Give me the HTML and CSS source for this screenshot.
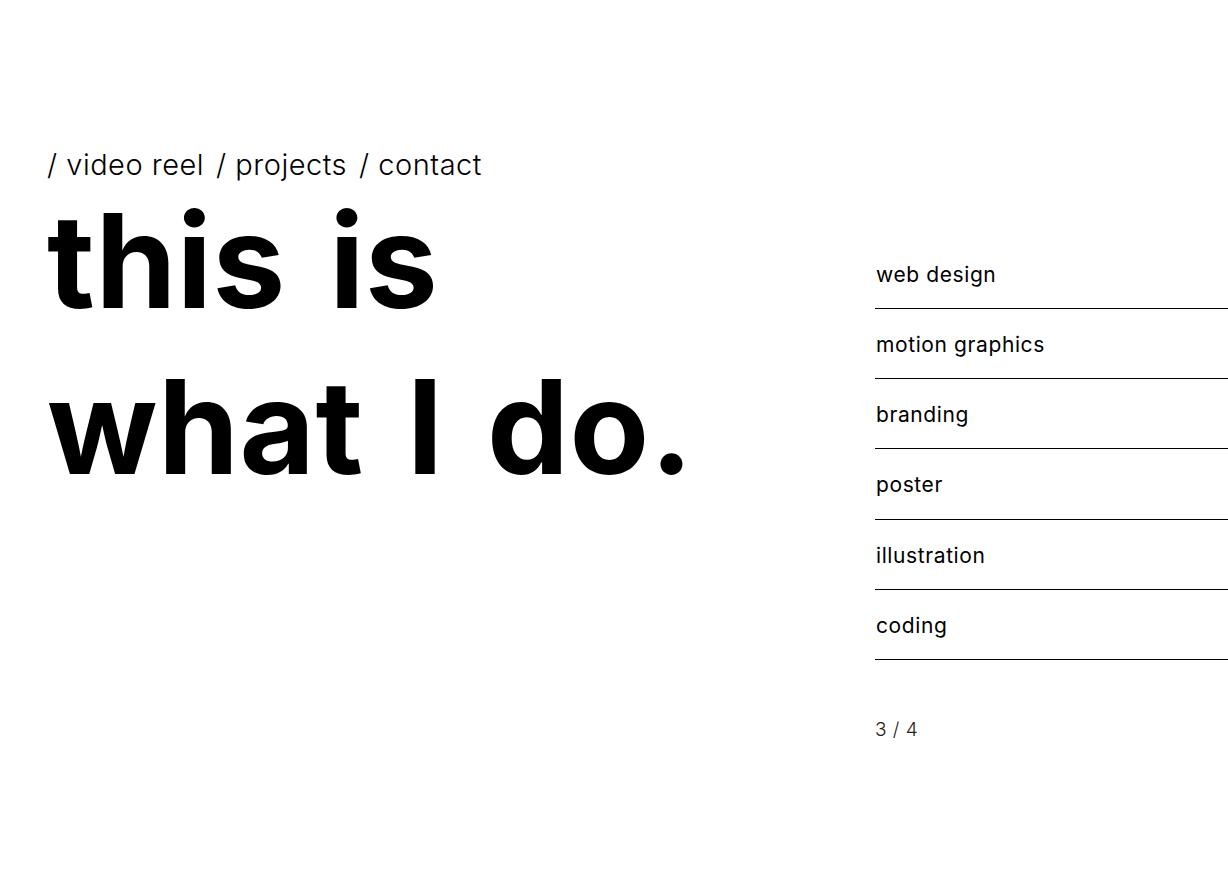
FILE: index.html
```html
<!DOCTYPE html>
<html lang="en">
<head>
<meta charset="utf-8">
<title>this is what I do.</title>
<link rel="stylesheet" href="styles.css">
</head>
<body>
<div class="page">
  <section class="intro">
    <nav class="nav">
      <a href="#">/ video reel</a>
      <a href="#">/ projects</a>
      <a href="#">/ contact</a>
    </nav>
    <h1 class="title">this is<br>what I do.</h1>
  </section>
  <aside class="services">
    <ul class="list">
      <li>web design</li>
      <li>motion graphics</li>
      <li>branding</li>
      <li>poster</li>
      <li>illustration</li>
      <li>coding</li>
    </ul>
    <div class="pager">3 / 4</div>
  </aside>
</div>
</body>
</html>
```
FILE: styles.css
```css
html, body {
  margin: 0;
  padding: 0;
  background: #fff;
}
body {
  font-family: "Inter", "Lato", "Liberation Sans", sans-serif;
  color: #000;
}
.page {
  display: flex;
  justify-content: space-between;
  width: 1228px;
  height: 880px;
}
.intro {
  padding: 148px 0 0 47px;
}
.nav {
  display: flex;
  gap: 12px;
  font-size: 29px;
  font-weight: 300;
  line-height: 34px;
  letter-spacing: 0.5px;
}
.nav a {
  color: #000;
  text-decoration: none;
}
.title {
  margin: 0;
  font-size: 130px;
  font-weight: 700;
  line-height: 166px;
  letter-spacing: 0.5px;
  word-spacing: 12px;
  margin-top: -4px;
}
.services {
  width: 353px;
  padding-top: 239px;
}
.list {
  list-style: none;
  margin: 0;
  padding: 0;
}
.list li {
  height: 69px;
  border-bottom: 1px solid #000;
  font-size: 21px;
  line-height: 72px;
  letter-spacing: 0.6px;
  padding-left: 1px;
}
.list li:nth-child(4) {
  height: 70px;
}
.pager {
  margin-top: 58px;
  font-size: 19px;
  color: #222;
  font-weight: 300;
  letter-spacing: 0.5px;
}
```
